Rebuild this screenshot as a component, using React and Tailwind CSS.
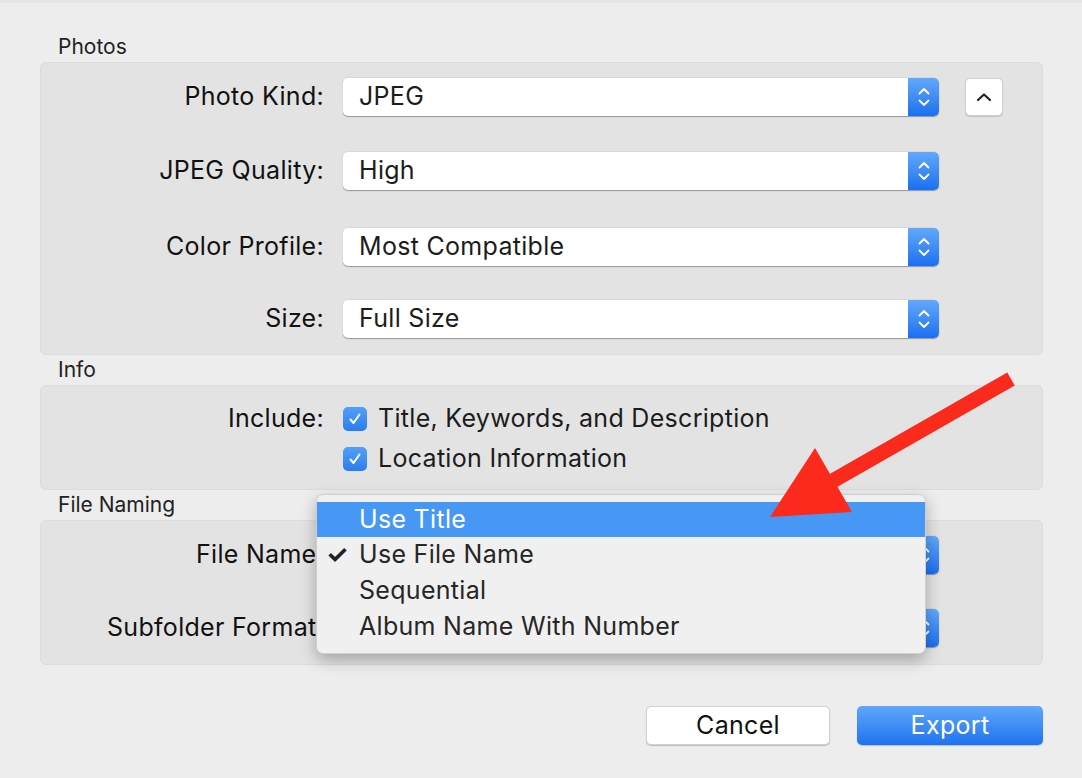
import React from 'react';

const font = { fontFamily: 'Inter, "Noto Sans", sans-serif' };

const Stepper = () => (
  <div className="w-[31px] h-full rounded-r-[5px] bg-gradient-to-b from-[#62a8fa] to-[#1a6ff0] flex items-center justify-center">
    <svg width="14" height="24" viewBox="0 0 14 24" fill="none" stroke="white" strokeWidth="1.8" strokeLinecap="round" strokeLinejoin="round">
      <path d="M2.5 8.5 L7 4 L11.5 8.5" />
      <path d="M2.5 15.5 L7 20 L11.5 15.5" />
    </svg>
  </div>
);

const Popup = ({ value }) => (
  <div className="w-[596px] h-[39px] flex bg-white rounded-[5px] border-t border-[#d8d8d8] shadow-[0_1px_1px_rgba(0,0,0,0.35)]">
    <div className="flex-1 flex items-center pl-[16px] text-[25px] tracking-[0.3px] text-[#1c1c1c]">{value}</div>
    <Stepper />
  </div>
);

const Row = ({ label, className = '', children }) => (
  <div className={`flex items-center h-[39px] ${className}`}>
    <div className="w-[283px] text-right text-[25px] tracking-[0.3px] text-[#111] whitespace-nowrap">{label}</div>
    <div className="ml-[19px] flex items-center">{children}</div>
  </div>
);

const SectionLabel = ({ children }) => (
  <div className="h-[30px] flex items-center pl-[58px] text-[21px] text-[#222]">{children}</div>
);

const Checkbox = () => (
  <div className="w-[24px] h-[24px] rounded-[5px] bg-gradient-to-b from-[#52a0f8] to-[#2a7df0] flex items-center justify-center">
    <svg width="16" height="16" viewBox="0 0 16 16" fill="none" stroke="white" strokeWidth="2" strokeLinecap="round" strokeLinejoin="round">
      <path d="M3.5 8.5 L6.5 12 L12.5 3.5" />
    </svg>
  </div>
);

export default function App() {
  return (
    <div style={font} className="relative w-[1082px] h-[778px] overflow-hidden bg-[#ededed] shadow-[inset_0_3px_0_#e5e5e5] pt-[32px]">
      <SectionLabel>Photos</SectionLabel>
      <div className="mx-[40px] w-[1003px] rounded-[6px] bg-[#e3e3e3] border border-[#dcdcdc] pt-[14px] pb-[16px] flex flex-col">
        <Row label="Photo Kind:">
          <Popup value="JPEG" />
          <button className="ml-[26px] w-[38px] h-[38px] rounded-[5px] bg-white border border-[#cfcfcf] shadow-[0_1px_1px_rgba(0,0,0,0.15)] flex items-center justify-center">
            <svg width="18" height="12" viewBox="0 0 18 12" fill="none" stroke="#222" strokeWidth="2.2" strokeLinecap="round" strokeLinejoin="round">
              <path d="M3 9 L9 3.5 L15 9" />
            </svg>
          </button>
        </Row>
        <Row label="JPEG Quality:" className="mt-[35px]"><Popup value="High" /></Row>
        <Row label="Color Profile:" className="mt-[37px]"><Popup value="Most Compatible" /></Row>
        <Row label="Size:" className="mt-[33px]"><Popup value="Full Size" /></Row>
      </div>

      <SectionLabel>Info</SectionLabel>
      <div className="mx-[40px] w-[1003px] h-[105px] rounded-[6px] bg-[#e3e3e3] border border-[#dcdcdc] pt-[13px]">
        <div className="flex items-center h-[40px]">
          <div className="w-[283px] text-right text-[25px] tracking-[0.3px] text-[#111]">Include:</div>
          <div className="ml-[19px] flex items-center gap-[11px]">
            <Checkbox />
            <span className="text-[25px] tracking-[0.3px] text-[#1c1c1c]">Title, Keywords, and Description</span>
          </div>
        </div>
        <div className="flex items-center h-[40px]">
          <div className="w-[283px]" />
          <div className="ml-[19px] flex items-center gap-[11px]">
            <Checkbox />
            <span className="text-[25px] tracking-[0.3px] text-[#1c1c1c]">Location Information</span>
          </div>
        </div>
      </div>

      <SectionLabel>File Naming</SectionLabel>
      <div className="mx-[40px] w-[1003px] rounded-[6px] bg-[#e3e3e3] border border-[#dcdcdc] pt-[14px] pb-[17px] flex flex-col gap-[34px]">
        <Row label="File Name:"><Popup value="" /></Row>
        <Row label="Subfolder Format:"><Popup value="" /></Row>
      </div>

      <div className="flex justify-end gap-[27px] mr-[39px] mt-[41px]">
        <button className="w-[184px] h-[39px] rounded-[5px] bg-white border border-[#d0d0d0] shadow-[0_1px_1px_rgba(0,0,0,0.2)] text-[25px] tracking-[0.3px] text-[#111]">Cancel</button>
        <button className="w-[186px] h-[39px] rounded-[5px] bg-gradient-to-b from-[#5fa7fa] to-[#1c72ee] text-[25px] tracking-[0.3px] text-white shadow-[0_1px_1px_rgba(0,0,0,0.2)]">Export</button>
      </div>

      {/* dropdown menu open over File Name */}
      <div className="absolute left-[316px] top-[494px] w-[610px] rounded-[7px] bg-[#f0f0f0] border border-[#cfcfcf] shadow-[0_6px_16px_rgba(0,0,0,0.28)] pt-[7px] pb-[8px]">
        <div className="h-[35px] bg-[#4797f5] flex items-center pl-[42px] text-[25px] tracking-[0.3px] text-white">Use Title</div>
        <div className="h-[36px] flex items-center text-[25px] tracking-[0.3px] text-[#262626]">
          <span className="w-[42px] pl-[9px] font-bold text-[#222]">✓</span>Use File Name
        </div>
        <div className="h-[36px] flex items-center pl-[42px] text-[25px] tracking-[0.3px] text-[#262626]">Sequential</div>
        <div className="h-[36px] flex items-center pl-[42px] text-[25px] tracking-[0.3px] text-[#262626]">Album Name With Number</div>
      </div>

      {/* red annotation arrow */}
      <svg className="absolute inset-0 pointer-events-none" width="1082" height="778" viewBox="0 0 1082 778">
        <line x1="1011" y1="379" x2="822" y2="487" stroke="#fb2a1c" strokeWidth="15" />
        <polygon points="770,517 815,448 852,512" fill="#fb2a1c" />
      </svg>
    </div>
  );
}
